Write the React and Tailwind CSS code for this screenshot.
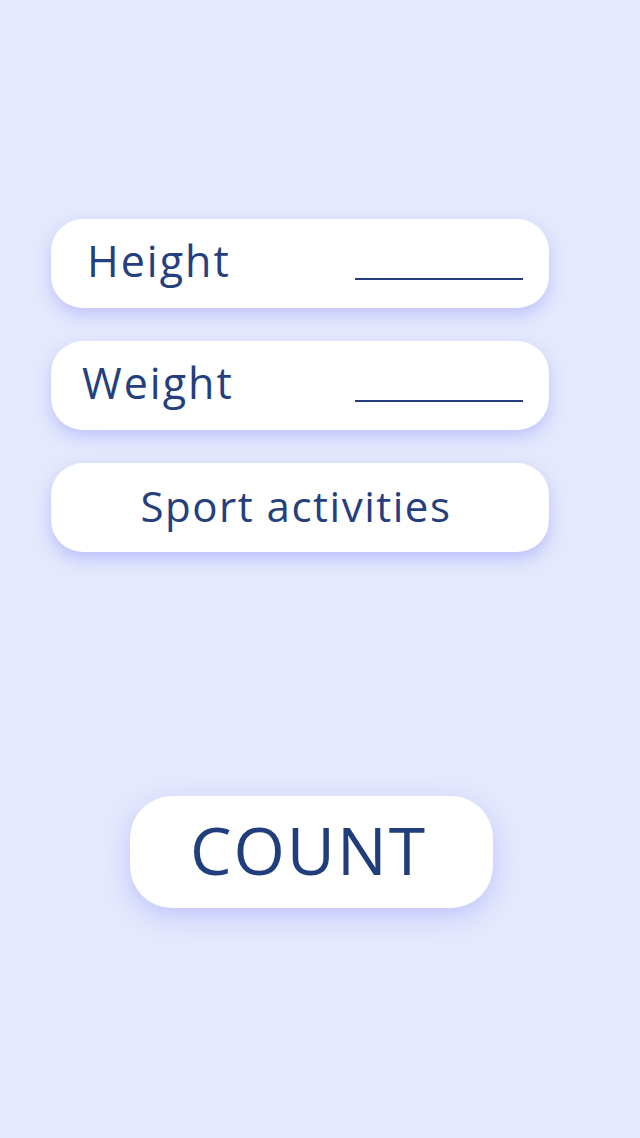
import React from 'react';

const FONT = "font-['Open_Sans',sans-serif]";

const Field = ({ label, indent }) => (
  <div className="flex items-center h-[89px] rounded-[32px] bg-white shadow-[0_7px_16px_rgba(150,150,250,0.45)]">
    <span className={`${indent} text-[43px] leading-none text-[#253f7e] tracking-[2px] -mt-[6px]`}>{label}</span>
    <span className="ml-auto mr-[26px] mt-[30px] w-[168px] h-[2px] bg-[#253f7e]" />
  </div>
);

export default function App() {
  return (
    <div className={`min-h-[1138px] bg-[#e4e9fd] ${FONT}`}>
      <div className="flex flex-col gap-[33px] pt-[219px] pl-[51px] w-[549px]">
        <Field label="Height" indent="pl-[36px]" />
        <Field label="Weight" indent="pl-[31px]" />
        <div className="flex items-center justify-center h-[89px] rounded-[32px] bg-white shadow-[0_7px_16px_rgba(150,150,250,0.5)]">
          <span className="text-[42px] leading-none text-[#253f7e] tracking-[1.5px] -mt-[4px] -ml-[8px]">Sport activities</span>
        </div>
      </div>
      <div className="flex pl-[130px] mt-[244px]">
        <button className="w-[363px] h-[112px] pb-[6px] pr-[6px] rounded-[42px] bg-white shadow-[0_8px_24px_rgba(150,150,250,0.45)] text-[66px] font-medium text-[#213e7c] tracking-[2px] leading-none">
          COUNT
        </button>
      </div>
    </div>
  );
}
